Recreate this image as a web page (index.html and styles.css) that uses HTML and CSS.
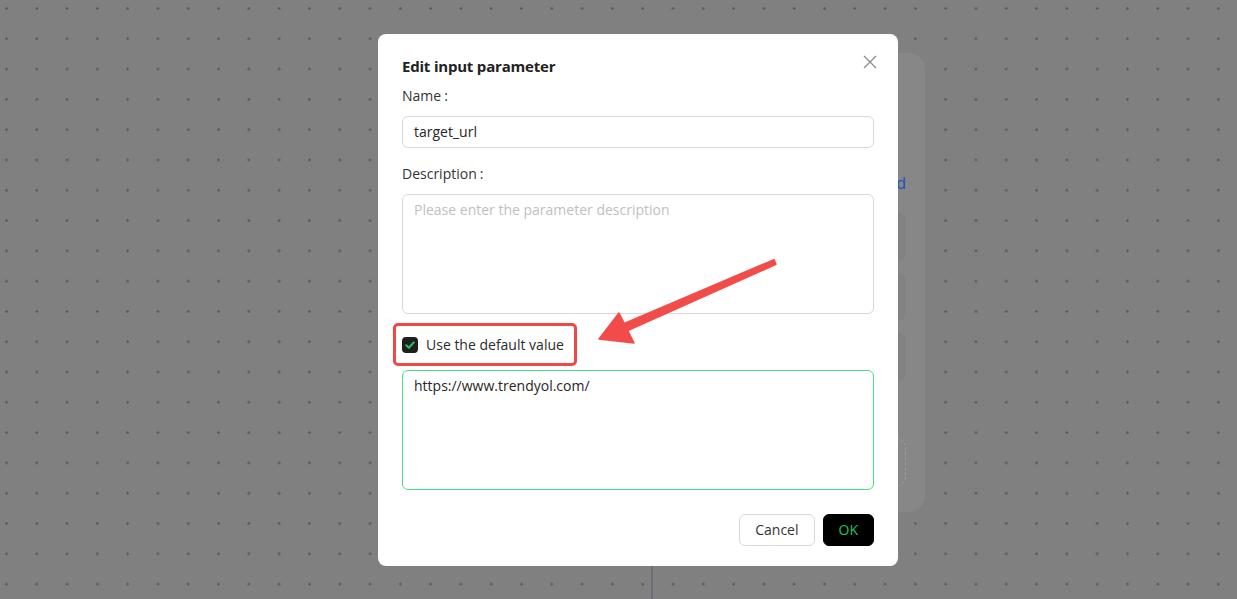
FILE: index.html
```html
<!DOCTYPE html>
<html lang="en">
<head>
    <meta charset="UTF-8">
    <link rel="stylesheet" href="styles.css">
</head>
<body>
    <div class="canvas">
        <div class="canvas-line"></div>
        <div class="node-card">
            <div class="node-link">Add</div>
            <div class="node-row"></div>
            <div class="node-row"></div>
            <div class="node-row"></div>
            <div class="node-drop"></div>
        </div>
    </div>

    <div class="modal">
        <button class="modal-close" aria-label="Close">
            <svg width="14" height="14" viewBox="0 0 14 14">
                <path d="M1 1 L13 13 M13 1 L1 13" stroke="#8c8c8c" stroke-width="1.3" fill="none"/>
            </svg>
        </button>
        <div class="modal-title">Edit input parameter</div>

        <div class="form-label">Name<span class="colon">:</span></div>
        <div class="text-input">target_url</div>

        <div class="form-label form-label-spaced">Description<span class="colon">:</span></div>
        <div class="text-area placeholder">Please enter the parameter description</div>

        <label class="check-row">
            <span class="check-box">
                <svg width="12" height="12" viewBox="0 0 12 12">
                    <path d="M2.2 6.2 L4.9 8.7 L9.8 3.4" stroke="#22c55e" stroke-width="2" fill="none" stroke-linecap="round" stroke-linejoin="round"/>
                </svg>
            </span>
            Use the default value
        </label>
        <div class="text-area text-area-active">https://www.trendyol.com/</div>

        <div class="modal-footer">
            <button class="btn btn-default">Cancel</button>
            <button class="btn btn-primary">OK</button>
        </div>
    </div>

    <!-- annotation marks drawn over the screenshot -->
    <div class="mark-box"></div>
    <svg class="mark-arrow" width="1237" height="599" viewBox="0 0 1237 599">
        <polygon points="774,259.6 624.2,323.4 619,313 599,339 634,343 627.8,330.6 776,264.4"
                 fill="#f24c4a" stroke="#f24c4a" stroke-width="1.5" stroke-linejoin="round"/>
    </svg>
</body>
</html>
```

FILE: styles.css
```css
html, body {
    height: 100%;
    margin: 0;
    padding: 0;
    overflow: hidden;
    font-family: 'Open Sans', 'Noto Sans', sans-serif;
    color: #2b2b2b;
}

body {
    background-color: #808080;
    background-image: radial-gradient(circle, #5c5c5c 1px, transparent 1.5px);
    background-size: 30.3px 30.3px;
    background-position: -8.7px -6.7px;
}

/* dimmed workflow canvas behind the dialog */
.canvas {
    position: relative;
    width: 100%;
    height: 100%;
}

.canvas-line {
    position: absolute;
    left: 651px;
    top: 420px;
    bottom: 0;
    width: 2px;
    background: #6c6f77;
}

.node-card {
    position: absolute;
    left: 650px;
    top: 53px;
    width: 275px;
    height: 459px;
    box-sizing: border-box;
    padding: 118px 19px 0 20px;
    background: #878787;
    border-radius: 16px;
    display: flex;
    flex-direction: column;
    gap: 12px;
}

.node-link {
    align-self: flex-end;
    font-size: 16px;
    line-height: 24px;
    color: #1a4fbf;
    margin-bottom: 6px;
}

.node-row {
    height: 48px;
    border-radius: 8px;
    background: #828282;
}

.node-drop {
    height: 47px;
    margin-top: 45px;
    border: 1.5px dashed #9c9c9c;
    border-radius: 10px;
}

/* dialog */
.modal {
    position: absolute;
    left: 378px;
    top: 34px;
    width: 520px;
    height: 532px;
    box-sizing: border-box;
    padding: 20px 24px;
    background: #fff;
    border-radius: 8px;
    display: flex;
    flex-direction: column;
}

.modal-close {
    position: absolute;
    top: 21px;
    right: 21px;
    width: 14px;
    height: 14px;
    padding: 0;
    border: none;
    background: none;
    cursor: pointer;
    display: flex;
}

.modal-title {
    font-size: 15px;
    font-weight: 700;
    letter-spacing: -0.2px;
    line-height: 24px;
    color: #222;
    margin-bottom: 7px;
}

.form-label {
    font-size: 14px;
    line-height: 22px;
    color: #333;
    margin-bottom: 9px;
}

.colon {
    margin-left: 3px;
}

.form-label-spaced {
    margin-top: 15px;
}

.text-input {
    height: 32px;
    box-sizing: border-box;
    padding: 0 11px;
    border: 1px solid #d9d9d9;
    border-radius: 6px;
    font-size: 14px;
    line-height: 30px;
    color: #262626;
}

.text-area {
    height: 120px;
    box-sizing: border-box;
    padding: 4px 11px;
    border: 1px solid #d9d9d9;
    border-radius: 6px;
    font-size: 14px;
    line-height: 22px;
    color: #262626;
}

.placeholder {
    color: #bfbfbf;
}

.text-area-active {
    border-color: #4ade80;
}

.check-row {
    display: flex;
    align-items: center;
    gap: 8px;
    height: 24px;
    margin: 19px 0 13px 0;
    font-size: 14px;
    line-height: 22px;
    color: #2b2b2b;
}

.check-box {
    width: 16px;
    height: 16px;
    border-radius: 4px;
    background: #1f1f1f;
    display: flex;
    align-items: center;
    justify-content: center;
}

.modal-footer {
    display: flex;
    justify-content: flex-end;
    gap: 8px;
    margin-top: auto;
}

.btn {
    height: 32px;
    padding: 0 15px 1px 15px;
    border-radius: 6px;
    font-family: inherit;
    font-size: 14px;
    cursor: pointer;
}

.btn-default {
    background: #fff;
    border: 1px solid #d9d9d9;
    color: #333;
}

.btn-primary {
    background: #000;
    border: 1px solid #000;
    color: #22c55e;
}

/* annotation */
.mark-box {
    position: absolute;
    left: 393px;
    top: 323px;
    width: 184px;
    height: 43px;
    box-sizing: border-box;
    border: 3px solid #f04848;
    border-radius: 5px;
}

.mark-arrow {
    position: absolute;
    left: 0;
    top: 0;
    pointer-events: none;
}
```
